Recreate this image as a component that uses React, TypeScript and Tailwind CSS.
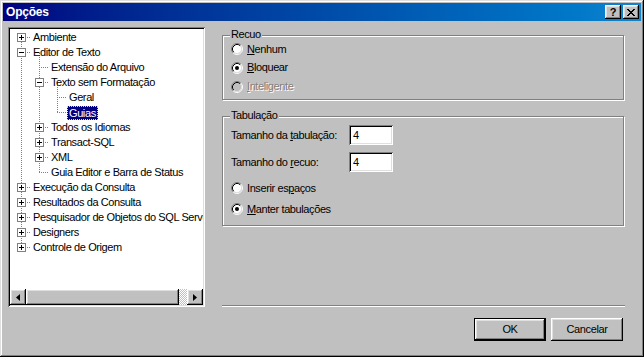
import React from 'react';

type Row = { t: string; l: number; box?: '+' | '-'; sel?: boolean };

const rows: Row[] = [
  { t: 'Ambiente', l: 0, box: '+' },
  { t: 'Editor de Texto', l: 0, box: '-' },
  { t: 'Extensão do Arquivo', l: 1 },
  { t: 'Texto sem Formatação', l: 1, box: '-' },
  { t: 'Geral', l: 2 },
  { t: 'Guias', l: 2, sel: true },
  { t: 'Todos os Idiomas', l: 1, box: '+' },
  { t: 'Transact-SQL', l: 1, box: '+' },
  { t: 'XML', l: 1, box: '+' },
  { t: 'Guia Editor e Barra de Status', l: 1 },
  { t: 'Execução da Consulta', l: 0, box: '+' },
  { t: 'Resultados da Consulta', l: 0, box: '+' },
  { t: 'Pesquisador de Objetos do SQL Server', l: 0, box: '+' },
  { t: 'Designers', l: 0, box: '+' },
  { t: 'Controle de Origem', l: 0, box: '+' },
];

const indent = ['pl-[7px]', 'pl-[25px]', 'pl-[43px]'];

const raised =
  'shadow-[inset_-1px_-1px_#000,inset_1px_1px_#fff,inset_-2px_-2px_#808080,inset_2px_2px_#dfdfdf]';
const sunken =
  'shadow-[inset_1px_1px_#808080,inset_-1px_-1px_#fff,inset_2px_2px_#000,inset_-2px_-2px_#dfdfdf]';

const cy = (i: number) => 8.5 + 15 * i;

function TreeLines() {
  const v = [
    { x: 11.5, a: 0, b: 14 },
    { x: 29.5, a: 1, b: 9 },
    { x: 47.5, a: 3, b: 5 },
  ];
  return (
    <svg className="absolute left-0 top-0" width="193" height="260" shapeRendering="crispEdges">
      {v.map((s, k) => (
        <line key={k} x1={s.x} x2={s.x} y1={cy(s.a)} y2={cy(s.b)} stroke="#808080" strokeDasharray="1 1" />
      ))}
      {rows.map((r, i) => (
        <line
          key={i}
          x1={11 + 18 * r.l}
          x2={21 + 18 * r.l}
          y1={cy(i)}
          y2={cy(i)}
          stroke="#808080"
          strokeDasharray="1 1"
        />
      ))}
    </svg>
  );
}

function Expander({ sign }: { sign: '+' | '-' }) {
  return (
    <span className="relative w-[9px] h-[9px] border border-[#808080] bg-white flex items-center justify-center">
      <span className="absolute w-[5px] h-px bg-black" />
      {sign === '+' && <span className="absolute w-px h-[5px] bg-black" />}
    </span>
  );
}

function Radio({ checked, disabled }: { checked?: boolean; disabled?: boolean }) {
  return (
    <svg width="12" height="12" className="shrink-0">
      <circle cx="6" cy="6" r="4.5" fill={disabled ? '#c0c0c0' : '#fff'} />
      <path d="M2.11 9.89 A5.5 5.5 0 0 1 9.89 2.11" stroke="#808080" fill="none" />
      <path d="M9.89 2.11 A5.5 5.5 0 0 1 2.11 9.89" stroke="#fff" fill="none" />
      <path d="M2.82 9.18 A4.5 4.5 0 0 1 9.18 2.82" stroke="#000" fill="none" />
      <path d="M9.18 2.82 A4.5 4.5 0 0 1 2.82 9.18" stroke="#dfdfdf" fill="none" />
      {checked && <circle cx="6" cy="6" r="2" fill="#000" />}
    </svg>
  );
}

function Arrow({ dir }: { dir: 'l' | 'r' }) {
  return (
    <svg width="4" height="7">
      <polygon points={dir === 'l' ? '4,0 4,7 0,3.5' : '0,0 0,7 4,3.5'} fill="#000" />
    </svg>
  );
}

function Group({ label, className, children }: { label: string; className: string; children: React.ReactNode }) {
  return (
    <div className={`relative border border-[#808080] shadow-[inset_1px_1px_#fff,1px_1px_#fff] ${className}`}>
      <span className="absolute -top-[8px] left-[7px] px-px bg-[#c0c0c0] leading-[13px]">{label}</span>
      {children}
    </div>
  );
}

export default function App() {
  return (
    <div className="w-[644px] h-[357px] bg-[#c0c0c0] p-[3px] flex flex-col text-[11px] tracking-[-0.4px] text-black font-['Liberation_Sans',Arial,sans-serif] shadow-[inset_-1px_-1px_#000,inset_1px_1px_#dfdfdf,inset_-2px_-2px_#808080,inset_2px_2px_#fff] select-none">
      {/* title bar */}
      <div className="h-[18px] shrink-0 flex items-center pl-[3px] pr-[2px] bg-gradient-to-r from-[#000080] to-[#1084d0]">
        <span className="text-white font-bold text-[12px] tracking-[-0.2px]">Opções</span>
        <div className="ml-auto flex gap-[2px]">
          <div className={`w-[16px] h-[14px] bg-[#c0c0c0] ${raised} flex items-center justify-center font-bold text-[11px] leading-none`}>
            ?
          </div>
          <div className={`w-[16px] h-[14px] bg-[#c0c0c0] ${raised} flex items-center justify-center`}>
            <svg width="8" height="7" shapeRendering="crispEdges">
              <path d="M0 0h2v1h1v1h2v-1h1v-1h2v1h-1v1h-1v1h-1v1h1v1h1v1h1v1h-2v-1h-1v-1h-2v1h-1v1h-2v-1h1v-1h1v-1h1v-1h-1v-1h-1v-1h-1z" fill="#000" />
            </svg>
          </div>
        </div>
      </div>

      {/* body */}
      <div className="flex h-[280px] mt-[6px] shrink-0">
        {/* tree */}
        <div className={`relative ml-[5px] w-[197px] h-[280px] bg-white ${sunken} flex flex-col p-[2px]`}>
          <div className="relative flex-1 overflow-hidden pt-px">
            <TreeLines />
            {rows.map((r, i) => (
              <div key={i} className={`relative h-[15px] flex items-center whitespace-nowrap ${indent[r.l]}`}>
                <span className="w-[16px] shrink-0 flex items-center">{r.box && <Expander sign={r.box} />}</span>
                {r.sel ? (
                  <span className="-ml-[2px] px-px h-[14px] leading-[12px] bg-[#000080] text-white border border-dotted border-[#e8e070]">
                    {r.t}
                  </span>
                ) : (
                  <span>{r.t}</span>
                )}
              </div>
            ))}
          </div>
          {/* horizontal scrollbar */}
          <div className="h-[16px] shrink-0 flex">
            <div className={`w-[16px] h-[16px] bg-[#c0c0c0] ${raised} flex items-center justify-center`}>
              <Arrow dir="l" />
            </div>
            <div className={`w-[153px] h-[16px] bg-[#c0c0c0] ${raised}`} />
            <div className="w-[8px] h-[16px] bg-[repeating-conic-gradient(#c0c0c0_0_25%,#fff_0_50%)] bg-[length:2px_2px]" />
            <div className={`w-[16px] h-[16px] bg-[#c0c0c0] ${raised} flex items-center justify-center`}>
              <Arrow dir="r" />
            </div>
          </div>
        </div>

        {/* right column */}
        <div className="ml-[17px] w-[403px] flex flex-col">
          <Group label="Recuo" className="mt-[8px] w-[402px] h-[65px] pt-[4px] pl-[8px]">
            <div className="h-[18px] flex items-center gap-[4px]">
              <Radio />
              <span>
                <u>N</u>enhum
              </span>
            </div>
            <div className="h-[19px] flex items-center gap-[4px]">
              <Radio checked />
              <span>
                <u>B</u>loquear
              </span>
            </div>
            <div className="h-[19px] flex items-center gap-[4px]">
              <Radio disabled />
              <span className="text-[#808080] [text-shadow:1px_1px_#fff]">
                <u>I</u>nteligente
              </span>
            </div>
          </Group>

          <Group label="Tabulação" className="mt-[16px] w-[402px] h-[110px] pt-[8px] pl-[8px]">
            <div className="h-[20px] flex items-center">
              <span className="w-[118px]">
                Tamanho da <u>t</u>abulação:
              </span>
              <div className={`w-[44px] h-[20px] bg-white ${sunken} pl-[4px] flex items-center`}>4</div>
            </div>
            <div className="h-[20px] mt-[7px] flex items-center">
              <span className="w-[118px]">
                Tamanho do <u>r</u>ecuo:
              </span>
              <div className={`w-[44px] h-[20px] bg-white ${sunken} pl-[4px] flex items-center`}>4</div>
            </div>
            <div className="h-[18px] mt-[7px] flex items-center gap-[4px]">
              <Radio />
              <span>
                Inserir es<u>p</u>aços
              </span>
            </div>
            <div className="h-[18px] mt-[3px] flex items-center gap-[4px]">
              <Radio checked />
              <span>
                <u>M</u>anter tabulações
              </span>
            </div>
          </Group>

          <div className="mt-auto mb-px h-px bg-[#808080] shadow-[0_1px_#fff]" />
        </div>
      </div>

      {/* buttons */}
      <div className="flex justify-end gap-[5px] pr-[18px] mt-[11px]">
        <div className="w-[72px] h-[23px] border border-black">
          <div className={`w-full h-full bg-[#c0c0c0] ${raised} flex items-center justify-center`}>OK</div>
        </div>
        <div className={`w-[72px] h-[23px] bg-[#c0c0c0] ${raised} flex items-center justify-center`}>Cancelar</div>
      </div>
    </div>
  );
}
